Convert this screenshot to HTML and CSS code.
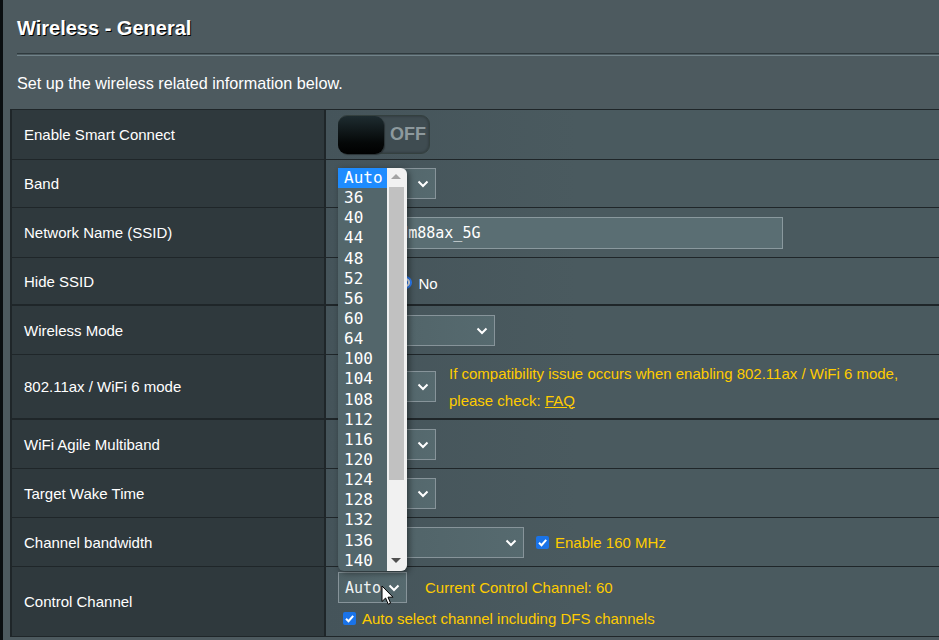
FILE: index.html
```html
<!DOCTYPE html>
<html>
<head>
<meta charset="utf-8">
<title>Wireless - General</title>
<link rel="stylesheet" href="styles.css">
</head>
<body>
<div class="page">
  <div class="panel">
    <h1 class="title">Wireless - General</h1>
    <div class="rule"></div>
    <p class="desc">Set up the wireless related information below.</p>
    <div class="form">
      <div class="row h50">
        <div class="th">Enable Smart Connect</div>
        <div class="td">
          <div class="toggle"><span class="knob"></span><span class="off">OFF</span></div>
        </div>
      </div>
      <div class="row h48">
        <div class="th">Band</div>
        <div class="td"><div class="sel w98"><span class="val">5 GHz</span><svg class="chev" viewBox="0 0 12 8"><path d="M1.5 1.5 L6 6 L10.5 1.5"/></svg></div></div>
      </div>
      <div class="row h50">
        <div class="th">Network Name (SSID)</div>
        <div class="td"><div class="input">ASUS_Ldm88ax_5G</div></div>
      </div>
      <div class="row h48 thick">
        <div class="th">Hide SSID</div>
        <div class="td">
          <span class="radio"></span><span class="rlabel">Yes</span>
          <span class="radio on"></span><span class="rlabel">No</span>
        </div>
      </div>
      <div class="row h49">
        <div class="th">Wireless Mode</div>
        <div class="td"><div class="sel w157"><span class="val">Auto</span><svg class="chev" viewBox="0 0 12 8"><path d="M1.5 1.5 L6 6 L10.5 1.5"/></svg></div></div>
      </div>
      <div class="row h65 thick">
        <div class="th">802.11ax / WiFi 6 mode</div>
        <div class="td">
          <div class="sel w98"><span class="val">Enable</span><svg class="chev" viewBox="0 0 12 8"><path d="M1.5 1.5 L6 6 L10.5 1.5"/></svg></div>
          <div class="note">If compatibility issue occurs when enabling 802.11ax / WiFi 6 mode,<br>please check: <a class="faq" href="#">FAQ</a></div>
        </div>
      </div>
      <div class="row h49">
        <div class="th">WiFi Agile Multiband</div>
        <div class="td"><div class="sel w98"><span class="val">Enable</span><svg class="chev" viewBox="0 0 12 8"><path d="M1.5 1.5 L6 6 L10.5 1.5"/></svg></div></div>
      </div>
      <div class="row h49">
        <div class="th">Target Wake Time</div>
        <div class="td"><div class="sel w98"><span class="val">Enable</span><svg class="chev" viewBox="0 0 12 8"><path d="M1.5 1.5 L6 6 L10.5 1.5"/></svg></div></div>
      </div>
      <div class="row h49">
        <div class="th">Channel bandwidth</div>
        <div class="td">
          <div class="sel w186"><span class="val">Auto</span><svg class="chev" viewBox="0 0 12 8"><path d="M1.5 1.5 L6 6 L10.5 1.5"/></svg></div>
          <span class="check"><svg viewBox="0 0 13 13"><path d="M3 6.8 L5.5 9.2 L10.2 3.8"/></svg></span>
          <span class="ylabel">Enable 160 MHz</span>
        </div>
      </div>
      <div class="row h70">
        <div class="th">Control Channel</div>
        <div class="td col">
          <div class="line1">
            <div class="sel w69"><span class="val">Auto</span><svg class="chev" viewBox="0 0 12 8"><path d="M1.5 1.5 L6 6 L10.5 1.5"/></svg></div>
            <span class="ylabel cur">Current Control Channel: 60</span>
          </div>
          <div class="line2">
            <span class="check"><svg viewBox="0 0 13 13"><path d="M3 6.8 L5.5 9.2 L10.2 3.8"/></svg></span>
            <span class="ylabel">Auto select channel including DFS channels</span>
          </div>
        </div>
      </div>
    </div>
  </div>

  <div class="popup">
    <ul class="opts">
      <li class="selected">Auto</li>
      <li>36</li><li>40</li><li>44</li><li>48</li><li>52</li><li>56</li><li>60</li><li>64</li>
      <li>100</li><li>104</li><li>108</li><li>112</li><li>116</li><li>120</li><li>124</li><li>128</li><li>132</li><li>136</li><li>140</li>
    </ul>
    <div class="sbar">
      <span class="arr up"></span>
      <span class="thumb"></span>
      <span class="arr down"></span>
    </div>
  </div>

  <svg class="cursor" viewBox="0 0 13 21"><path d="M1 1 L1 16.5 L4.6 13 L7.2 19.2 L9.6 18.2 L7 12.2 L12 12.2 Z"/></svg>
</div>
</body>
</html>
```

FILE: styles.css
```css
html, body {
  margin: 0;
  padding: 0;
}
body {
  background: #0a0e10;
  font-family: "Liberation Sans", Arial, sans-serif;
  width: 939px;
  height: 640px;
  overflow: hidden;
}
.page {
  position: relative;
  height: 640px;
  padding-left: 3px;
}
.panel {
  background: #4d5a5f;
  height: 640px;
  overflow: hidden;
}
.title {
  margin: 0;
  padding: 16px 0 0 14px;
  font-size: 20px;
  line-height: 24px;
  font-weight: bold;
  color: #ffffff;
  text-shadow: 1px 1px 0 #000;
}
.rule {
  margin: 13px 0 0 14px;
  height: 1px;
  border-top: 1px solid #2f3a3e;
  border-bottom: 1px solid #71838a;
}
.desc {
  margin: 17px 0 0 14px;
  font-size: 16.2px;
  line-height: 20px;
  color: #ffffff;
}
.form {
  margin: 16px 0 0 7px;
  width: 940px;
  border-top: 1px solid #1f2629;
  border-left: 2px solid #1f2629;
}
.row {
  display: grid;
  grid-template-columns: 314px 1fr;
  box-sizing: border-box;
  border-bottom: 1px solid #1f2629;
}
.row.thick {
  border-bottom-width: 2px;
}
.h48 { height: 48px; }
.h49 { height: 49px; }
.h50 { height: 50px; }
.h65 { height: 65px; }
.h70 { height: 70px; }
.th {
  background: #2f393d;
  border-right: 2px solid #1f2629;
  color: #ffffff;
  font-size: 15px;
  padding-left: 12px;
  display: flex;
  align-items: center;
}
.td {
  background: linear-gradient(90deg, #45545a 0%, #4a5a5f 40%, #4a5a5f 100%);
  padding-left: 12px;
  display: flex;
  align-items: center;
  color: #ffffff;
  font-size: 15px;
}
.td.col {
  flex-direction: column;
  align-items: flex-start;
  justify-content: flex-start;
  padding-top: 5px;
  box-sizing: border-box;
}
.toggle {
  width: 92px;
  height: 39px;
  box-sizing: border-box;
  border-radius: 9px;
  background: #3f4c51;
  border: 1px solid #34403f;
  box-shadow: inset 0 0 3px rgba(0,0,0,.35);
  display: flex;
  align-items: center;
}
.knob {
  width: 46px;
  height: 38px;
  border-radius: 9px;
  background: linear-gradient(180deg, #1e2c30 0%, #050808 70%, #000 100%);
  box-shadow: 1px 1px 1px #2a3235;
  margin-left: -1px;
}
.off {
  margin-left: 6px;
  font-size: 18px;
  font-weight: bold;
  color: #8d999d;
}
.sel {
  position: relative;
  height: 31px;
  box-sizing: border-box;
  border: 1px solid #87949a;
  background: linear-gradient(90deg, #4f6166, #566a6f);
  display: flex;
  align-items: center;
}
.w98 { width: 98px; }
.w157 { width: 157px; }
.w186 { width: 186px; }
.w69 { width: 69px; }
.val {
  font-family: "DejaVu Sans Mono", monospace;
  font-size: 15px;
  color: #eef2f3;
  padding-left: 6px;
}
.chev {
  position: absolute;
  right: 6px;
  top: 11px;
  width: 12px;
  height: 8px;
  fill: none;
  stroke: #ffffff;
  stroke-width: 2;
}
.input {
  width: 445px;
  height: 32px;
  box-sizing: border-box;
  border: 1px solid #8a999e;
  background: #5a6e73;
  font-family: "DejaVu Sans Mono", monospace;
  font-size: 15px;
  color: #ffffff;
  padding-left: 6px;
  display: flex;
  align-items: center;
}
.radio {
  width: 13px;
  height: 13px;
  border-radius: 50%;
  border: 2px solid #2a7fff;
  box-sizing: border-box;
  background: #f4f4f4;
  margin: 2px 4px 0 4px;
  display: inline-flex;
  align-items: center;
  justify-content: center;
}
.radio.on {
  margin-left: 16px;
  margin-right: 6px;
}
.radio.on::after {
  content: "";
  width: 5px;
  height: 5px;
  border-radius: 50%;
  background: #2a7fff;
}
.rlabel {
  font-size: 15px;
  color: #ffffff;
  margin-top: 4px;
}
.note {
  margin-left: 13px;
  color: #ffcc00;
  font-size: 15px;
  line-height: 27px;
}
.faq {
  color: #ffcc00;
  text-decoration: underline;
}
.check {
  width: 13px;
  height: 13px;
  border-radius: 2px;
  background: #1a73e8;
  display: inline-flex;
  margin-left: 12px;
  margin-right: 6px;
}
.check svg {
  width: 13px;
  height: 13px;
  fill: none;
  stroke: #ffffff;
  stroke-width: 2;
}
.ylabel {
  color: #ffcc00;
  font-size: 15px;
}
.line1 {
  display: flex;
  align-items: center;
}
.cur {
  margin-left: 18px;
}
.line2 {
  display: flex;
  align-items: center;
  margin-top: 7px;
}
.line2 .check {
  margin-left: 5px;
}
.popup {
  position: absolute;
  left: 338px;
  top: 168px;
  width: 69px;
  height: 403px;
  display: flex;
  border-radius: 0 6px 6px 6px;
  overflow: hidden;
  background: #53666b;
  box-shadow: 2px 2px 6px rgba(0,0,0,.45);
}
.opts {
  list-style: none;
  margin: 0;
  padding: 0;
  width: 49px;
}
.opts li {
  height: 20.15px;
  line-height: 20px;
  padding-left: 6px;
  font-family: "DejaVu Sans Mono", monospace;
  font-size: 16px;
  color: #ffffff;
}
.opts li.selected {
  background: #1e8cff;
}
.sbar {
  position: relative;
  width: 20px;
  background: #f1f1f1;
}
.thumb {
  position: absolute;
  left: 2px;
  right: 3px;
  top: 19px;
  height: 293px;
  background: #c1c1c1;
}
.arr {
  position: absolute;
  left: 4px;
  width: 0;
  height: 0;
  border-left: 5px solid transparent;
  border-right: 5px solid transparent;
}
.arr.up {
  top: 6px;
  border-bottom: 5px solid #a3a3a3;
}
.arr.down {
  bottom: 8px;
  border-top: 5px solid #505050;
}
.cursor {
  position: absolute;
  left: 381px;
  top: 585px;
  width: 13px;
  height: 21px;
  fill: #ffffff;
  stroke: #000000;
  stroke-width: 1;
}
```
